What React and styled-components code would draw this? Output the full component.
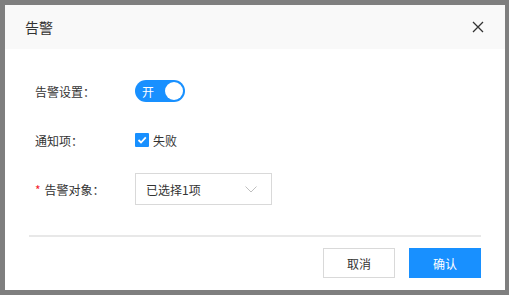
import styled, { createGlobalStyle } from "styled-components";

const GlobalStyle = createGlobalStyle`
  html, body {
    margin: 0;
    padding: 0;
    background: #7f7f7f;
  }
  body {
    padding: 5px;
    font-family: "Noto Sans CJK SC", "Liberation Sans", sans-serif;
  }
  * {
    box-sizing: border-box;
  }
`;

const Dialog = styled.div`
  width: 500px;
  height: 285px;
  background: #ffffff;
  display: flex;
  flex-direction: column;
`;

const Header = styled.div`
  height: 44px;
  padding: 0 21px 0 20px;
  background: #f9f9f9;
  display: flex;
  align-items: center;
  justify-content: space-between;
`;

const Title = styled.div`
  font-size: 14px;
  color: #333333;
`;

const CloseButton = styled.div`
  width: 12px;
  height: 12px;
  display: flex;
  align-items: center;
  justify-content: center;
  cursor: pointer;
`;

const Body = styled.div`
  padding: 26px 0 0 30px;
  display: flex;
  flex-direction: column;
  gap: 17px;
`;

const Row = styled.div`
  height: 32px;
  display: flex;
  align-items: center;
`;

const Label = styled.div`
  width: 100px;
  font-size: 12px;
  color: #333333;
`;

const Required = styled.span`
  color: #f5222d;
  margin-right: 4px;
`;

const Switch = styled.div`
  width: 50px;
  height: 22px;
  border-radius: 11px;
  background: #1890ff;
  display: flex;
  align-items: center;
  justify-content: space-between;
  padding: 0 2px 0 7px;
  color: #ffffff;
  font-size: 12px;
`;

const Knob = styled.div`
  width: 18px;
  height: 18px;
  border-radius: 50%;
  background: #ffffff;
`;

const CheckLabel = styled.label`
  display: flex;
  align-items: center;
  gap: 4px;
  font-size: 12px;
  color: #333333;
`;

const CheckBox = styled.div`
  width: 14px;
  height: 14px;
  border-radius: 1px;
  background: #1890ff;
  display: flex;
  align-items: center;
  justify-content: center;
`;

const Select = styled.div`
  width: 137px;
  height: 32px;
  border: 1px solid #d9d9d9;
  padding: 0 14px 0 10px;
  display: flex;
  align-items: center;
  justify-content: space-between;
  font-size: 12px;
  color: #333333;
`;

const Divider = styled.div`
  height: 2px;
  background: #e8e8e8;
  margin: 30px 24px 0 24px;
`;

const Footer = styled.div`
  display: flex;
  justify-content: flex-end;
  gap: 14px;
  padding: 11px 24px 0 0;
`;

const Button = styled.button`
  width: 72px;
  height: 30px;
  border: 1px solid ${(p) => (p.$primary ? "#1890ff" : "#d9d9d9")};
  background: ${(p) => (p.$primary ? "#1890ff" : "#ffffff")};
  color: ${(p) => (p.$primary ? "#ffffff" : "#333333")};
  font-family: inherit;
  font-size: 12px;
  padding: 0;
  cursor: pointer;
`;

export default function App() {
  return (
    <>
      <GlobalStyle />
      <Dialog>
        <Header>
          <Title>告警</Title>
          <CloseButton>
            <svg width="12" height="12" viewBox="0 0 12 12">
              <path d="M1 1L11 11M11 1L1 11" stroke="#333" strokeWidth="1.3" fill="none" />
            </svg>
          </CloseButton>
        </Header>
        <Body>
          <Row>
            <Label>告警设置：</Label>
            <Switch>
              开
              <Knob />
            </Switch>
          </Row>
          <Row>
            <Label>通知项：</Label>
            <CheckLabel>
              <CheckBox>
                <svg width="10" height="10" viewBox="0 0 10 10">
                  <path d="M1.5 5L4 7.5L8.8 2.3" stroke="#fff" strokeWidth="1.8" fill="none" />
                </svg>
              </CheckBox>
              失败
            </CheckLabel>
          </Row>
          <Row>
            <Label>
              <Required>*</Required>告警对象：
            </Label>
            <Select>
              已选择1项
              <svg width="12" height="7" viewBox="0 0 12 7">
                <path d="M0.5 0.5L6 6L11.5 0.5" stroke="#bfbfbf" strokeWidth="1" fill="none" />
              </svg>
            </Select>
          </Row>
        </Body>
        <Divider />
        <Footer>
          <Button>取消</Button>
          <Button $primary>确认</Button>
        </Footer>
      </Dialog>
    </>
  );
}
